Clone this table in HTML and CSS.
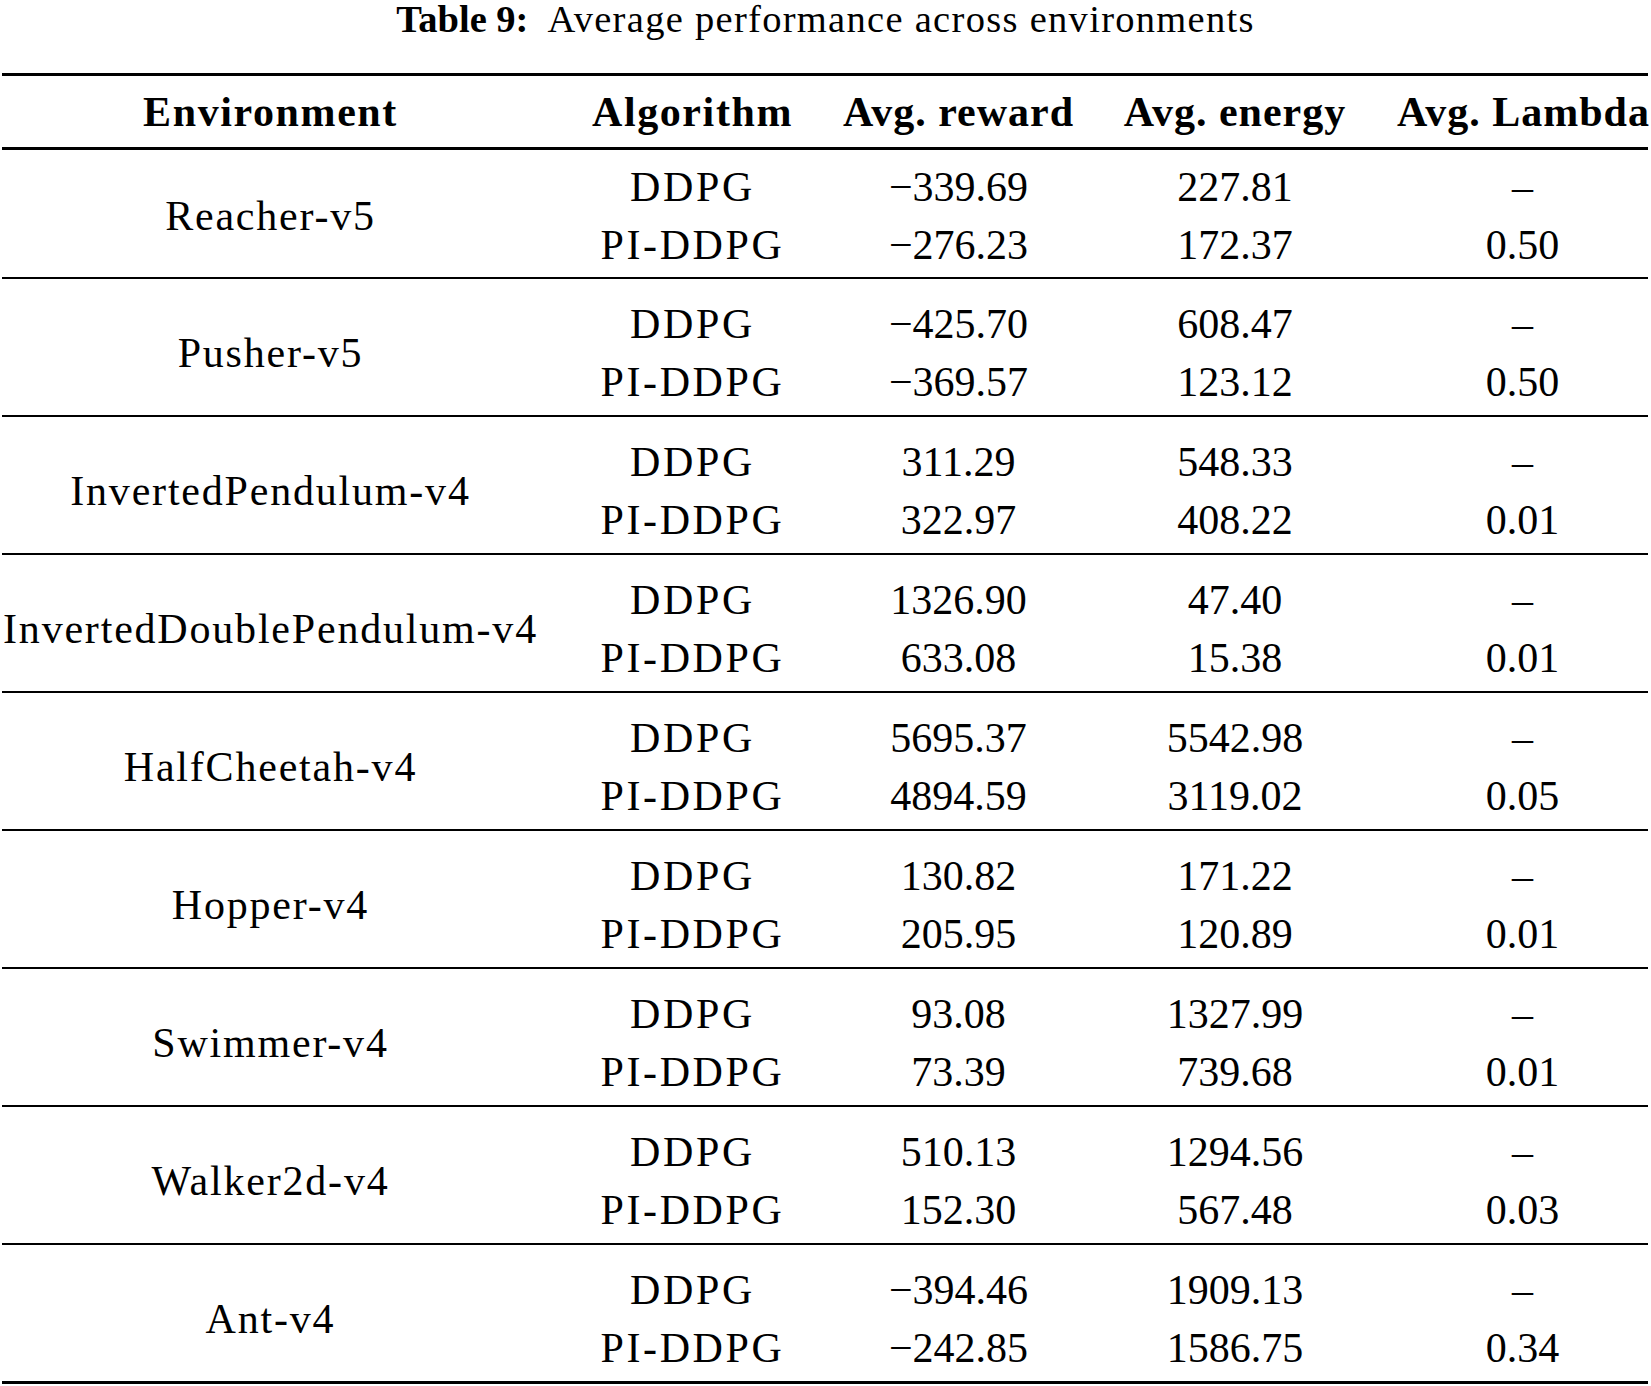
FILE: index.html
```html
<!DOCTYPE html>
<html lang="en">
<head>
<meta charset="utf-8">
<title>Table 9</title>
<link rel="stylesheet" href="styles.css">
</head>
<body>
<div class="caption"><span class="cap-label">Table 9:</span><span class="cap-text">Average performance across environments</span></div>
<table class="results">
  <colgroup>
    <col class="c-env">
    <col class="c-alg">
    <col class="c-rew">
    <col class="c-ene">
    <col class="c-lam">
  </colgroup>
  <thead>
    <tr>
      <th class="env">Environment</th>
      <th class="alg">Algorithm</th>
      <th>Avg. reward</th>
      <th>Avg. energy</th>
      <th class="lam">Avg. Lambda</th>
    </tr>
  </thead>
  <tbody>
    <tr class="first top"><td class="env" rowspan="2">Reacher-v5</td><td class="alg">DDPG</td><td>−339.69</td><td>227.81</td><td class="lam">–</td></tr>
    <tr class="last"><td class="alg">PI-DDPG</td><td>−276.23</td><td>172.37</td><td class="lam">0.50</td></tr>

    <tr class="first"><td class="env" rowspan="2">Pusher-v5</td><td class="alg">DDPG</td><td>−425.70</td><td>608.47</td><td class="lam">–</td></tr>
    <tr class="last"><td class="alg">PI-DDPG</td><td>−369.57</td><td>123.12</td><td class="lam">0.50</td></tr>

    <tr class="first"><td class="env" rowspan="2">InvertedPendulum-v4</td><td class="alg">DDPG</td><td>311.29</td><td>548.33</td><td class="lam">–</td></tr>
    <tr class="last"><td class="alg">PI-DDPG</td><td>322.97</td><td>408.22</td><td class="lam">0.01</td></tr>

    <tr class="first"><td class="env" rowspan="2">InvertedDoublePendulum-v4</td><td class="alg">DDPG</td><td>1326.90</td><td>47.40</td><td class="lam">–</td></tr>
    <tr class="last"><td class="alg">PI-DDPG</td><td>633.08</td><td>15.38</td><td class="lam">0.01</td></tr>

    <tr class="first"><td class="env" rowspan="2">HalfCheetah-v4</td><td class="alg">DDPG</td><td>5695.37</td><td>5542.98</td><td class="lam">–</td></tr>
    <tr class="last"><td class="alg">PI-DDPG</td><td>4894.59</td><td>3119.02</td><td class="lam">0.05</td></tr>

    <tr class="first"><td class="env" rowspan="2">Hopper-v4</td><td class="alg">DDPG</td><td>130.82</td><td>171.22</td><td class="lam">–</td></tr>
    <tr class="last"><td class="alg">PI-DDPG</td><td>205.95</td><td>120.89</td><td class="lam">0.01</td></tr>

    <tr class="first"><td class="env" rowspan="2">Swimmer-v4</td><td class="alg">DDPG</td><td>93.08</td><td>1327.99</td><td class="lam">–</td></tr>
    <tr class="last"><td class="alg">PI-DDPG</td><td>73.39</td><td>739.68</td><td class="lam">0.01</td></tr>

    <tr class="first"><td class="env" rowspan="2">Walker2d-v4</td><td class="alg">DDPG</td><td>510.13</td><td>1294.56</td><td class="lam">–</td></tr>
    <tr class="last"><td class="alg">PI-DDPG</td><td>152.30</td><td>567.48</td><td class="lam">0.03</td></tr>

    <tr class="first"><td class="env end" rowspan="2">Ant-v4</td><td class="alg">DDPG</td><td>−394.46</td><td>1909.13</td><td class="lam">–</td></tr>
    <tr class="last end"><td class="alg">PI-DDPG</td><td>−242.85</td><td>1586.75</td><td class="lam">0.34</td></tr>
  </tbody>
</table>
</body>
</html>
```

FILE: styles.css
```css
html, body {
  margin: 0;
  padding: 0;
  background: #ffffff;
}

body {
  font-family: "Liberation Serif", "Times New Roman", serif;
  color: #000000;
  width: 1651px;
}

.caption {
  text-align: center;
  font-size: 38.5px;
  line-height: 38px;
  height: 38px;
  margin-bottom: 35px;
  white-space: nowrap;
}

.cap-label {
  font-weight: bold;
  margin-right: 19px;
}

.cap-text {
  letter-spacing: 1.3px;
}

.results {
  margin-left: 2px;
  width: 1646px;
  table-layout: fixed;
  border-collapse: separate;
  border-spacing: 0;
  font-size: 42px;
  line-height: 58px;
}

.c-env { width: 564px; }
.c-alg { width: 253px; }
.c-rew { width: 279px; }
.c-ene { width: 274px; }
.c-lam { width: 276px; }

.results th,
.results td {
  padding: 0;
  text-align: center;
  white-space: nowrap;
  vertical-align: top;
}

.results th {
  font-weight: bold;
  letter-spacing: 1px;
  border-top: 3px solid #000;
  border-bottom: 3px solid #000;
  padding-top: 7px;
  padding-bottom: 6px;
}

.results th.env,
.results th.alg {
  letter-spacing: 1.6px;
}

.results td.env {
  letter-spacing: 1.8px;
}

.results td.alg {
  letter-spacing: 2.6px;
}

.results .env {
  padding-right: 27px;
  vertical-align: middle;
}

.results .lam {
  padding-left: 25px;
}

.results tr.first td {
  border-top: 2px solid #000;
  padding-top: 16px;
}

.results tr.first.top td {
  border-top: 0;
  padding-top: 8px;
}

.results tr.last td {
  padding-bottom: 4px;
}

.results tr.first.top td.env {
  padding-bottom: 3px;
}

.results tr.first td.env {
  padding-bottom: 4px;
}

.results tr.top + tr.last td {
  padding-bottom: 3px;
}

.results td.end,
.results tr.end td {
  border-bottom: 3px solid #000;
}
```
